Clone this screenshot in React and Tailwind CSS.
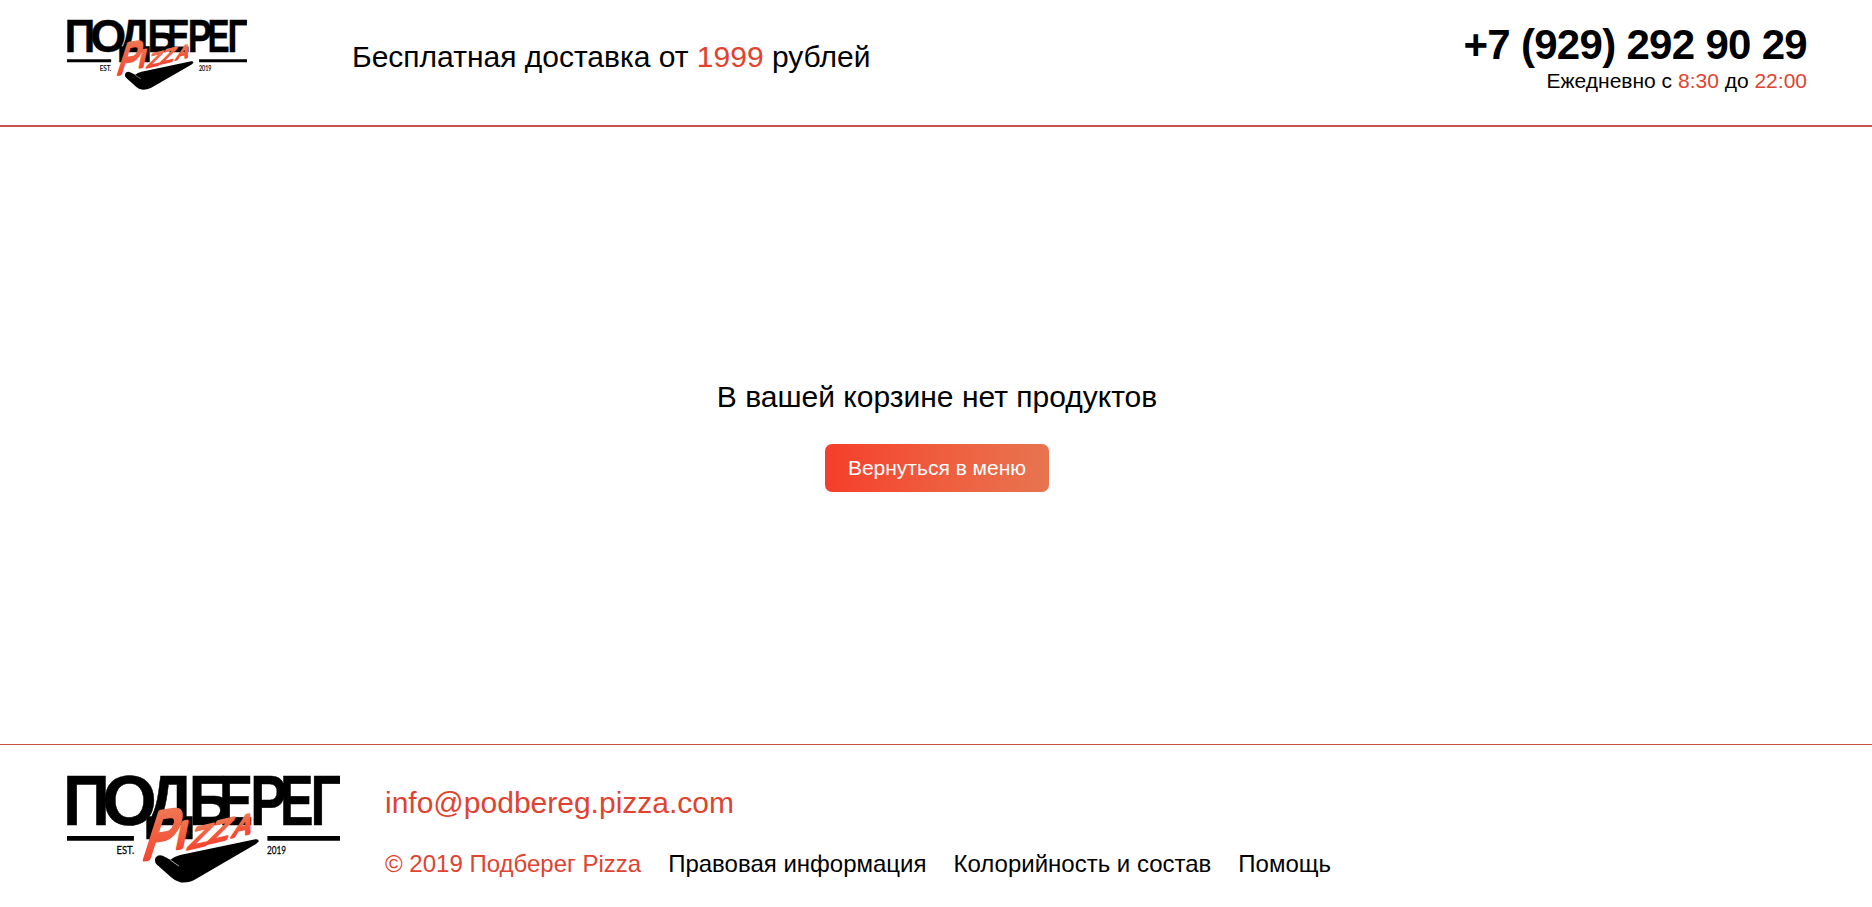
const LETTERS = [
  { ch: "П", x: 40, sx: 0.92 },
  { ch: "О", x: 157, sx: 0.99 },
  { ch: "Д", x: 288, sx: 0.94 },
  { ch: "Б", x: 417, sx: 0.82 },
  { ch: "Е", x: 506, sx: 0.72 },
  { ch: "Р", x: 600, sx: 0.77 },
  { ch: "Е", x: 689, sx: 0.71 },
  { ch: "Г", x: 780, sx: 0.76 },
];

const SCRIPT = [
  { ch: "P", m: "matrix(0.68 -0.1 -0.32 1 273 297)", size: 202, w: 16 },
  { ch: "I", m: "matrix(1 -0.2 -0.2 1 373 266)", size: 112, w: 12 },
  { ch: "Z", m: "matrix(1.05 -0.25 -0.4 1 410 267)", size: 92, w: 9 },
  { ch: "Z", m: "matrix(1.05 -0.25 -0.4 1 470 250)", size: 94, w: 9 },
  { ch: "A", m: "matrix(0.9 -0.2 -0.35 1 544 231)", size: 88, w: 9 },
];

function Logo({ id, className }) {
  return (
    <svg viewBox="52 45 816 322" className={className} role="img">
      <defs>
        <linearGradient id={id} x1="0" y1="0" x2="0" y2="1">
          <stop offset="0.2" stopColor="#ef7450" />
          <stop offset="0.85" stopColor="#f4452f" />
        </linearGradient>
      </defs>
      <g fontFamily="Liberation Sans, sans-serif" fontWeight="700" fontSize="212" stroke="#000" strokeWidth="1.5">
        {LETTERS.map((l, i) => (
          <text key={i} transform={`translate(${l.x} 194) scale(${l.sx} 1)`}>{l.ch}</text>
        ))}
      </g>
      <path d="M52 227H252V241H52ZM651 227H868V241H651Z" />
      <g fontFamily="Lato, sans-serif" fontSize="32" stroke="#000" strokeWidth="0.8">
        <text x="200" y="282" textLength="53" lengthAdjust="spacingAndGlyphs">EST.</text>
        <text x="650" y="282" textLength="57" lengthAdjust="spacingAndGlyphs">2019</text>
      </g>
      <path d="M317 291Q324 282 338 286L361 298Q372 289 390 284L615 237Q626 236 625 243L617 251L436 356Q416 368 390 365Q374 361 365 352L321 313Q311 303 317 291Z" />
      <path d="M361 299L387 317" stroke="#fff" strokeWidth="2" />
      <g fontFamily="Liberation Sans, sans-serif" strokeLinejoin="round">
        {SCRIPT.map((l, i) => (
          <text key={i} transform={l.m} fontSize={l.size} fill={`url(#${id})`} stroke={`url(#${id})`} strokeWidth={l.w}>{l.ch}</text>
        ))}
      </g>
    </svg>
  );
}

export default function App() {
  return (
    <div className="flex h-[907px] w-full flex-col bg-white font-['Liberation_Sans',Arial,sans-serif] text-black">
      <header className="flex h-[127px] shrink-0 items-start border-b-2 border-[#c4564a] pl-[67px] pr-[65px]">
        <Logo id="brush-top" className="mt-[19px] h-[71px] w-[180px]" />
        <p className="ml-[105px] mt-[34px] text-[30px] leading-[45px]">
          Бесплатная доставка от <span className="text-[#e0432f]">1999</span> рублей
        </p>
        <div className="ml-auto mt-[20px] text-right">
          <div className="text-[42px] font-bold leading-[49px] tracking-[-0.7px]">+7 (929) 292 90 29</div>
          <div className="-mt-px text-[21px] leading-[25px]">
            Ежедневно с <span className="text-[#e0432f]">8:30</span> до <span className="text-[#e0432f]">22:00</span>
          </div>
        </div>
      </header>
      <main className="flex flex-1 flex-col items-center pl-[2px] pt-[247px]">
        <h1 className="text-[30px] leading-[45px]">В вашей корзине нет продуктов</h1>
        <button className="mt-[25px] h-12 w-56 rounded-[7px] bg-linear-to-r from-[#f53d2a] to-[#e8744f] text-[21px] text-white">
          Вернуться в меню
        </button>
      </main>
      <footer className="flex h-[163px] shrink-0 items-start border-t border-[#c9503f] pl-[67px]">
        <Logo id="brush-bottom" className="mt-[30px] h-[108px] w-[273px]" />
        <div className="ml-[45px] mt-[35px]">
          <a className="block text-[30px] leading-[45px] text-[#e0432f]">info@podbereg.pizza.com</a>
          <nav className="mt-[21px] flex gap-[27px] text-[24px] leading-[36px]">
            <span className="text-[#e0432f]">© 2019 Подберег Pizza</span>
            <a>Правовая информация</a>
            <a>Колорийность и состав</a>
            <a>Помощь</a>
          </nav>
        </div>
      </footer>
    </div>
  );
}
